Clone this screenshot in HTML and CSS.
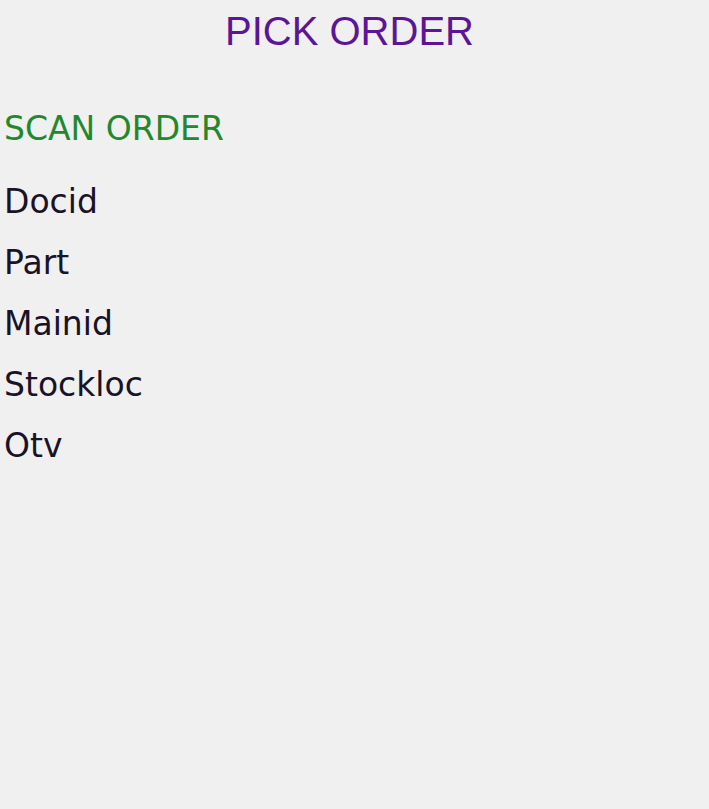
FILE: index.html
```html
<!DOCTYPE html>
<html lang="en">
<head>
  <meta charset="UTF-8">
  <meta name="viewport" content="width=device-width, initial-scale=1.0">
  <title>Pick Order</title>
  <link rel="stylesheet" href="styles.css">
</head>
<body>

<div class="page">
  <h1 class="title">PICK ORDER</h1>

  <h2 class="scan-title">SCAN ORDER</h2>

  <div class="fields">
    <div class="field">Docid</div>
    <div class="field">Part</div>
    <div class="field">Mainid</div>
    <div class="field">Stockloc</div>
    <div class="field">Otv</div>
  </div>
</div>

</body>
</html>
```

FILE: styles.css
```css
body {
  margin: 0;
  padding: 0;
  background-color: #f0f0f0;
  font-family: "DejaVu Sans", Verdana, sans-serif;
}

.page {
  padding: 8px 0 0 4px;
}

.title {
  margin: 0;
  padding-right: 14px;
  font-family: "Liberation Sans", Arial, sans-serif;
  font-size: 40px;
  font-weight: normal;
  line-height: 46px;
  text-align: center;
  color: #5b1596;
}

.scan-title {
  margin: 44px 0 12px 0;
  font-size: 33px;
  font-weight: normal;
  line-height: 61px;
  color: #22882c;
}

.field {
  font-size: 33px;
  line-height: 61px;
  color: #1a1226;
}
```
